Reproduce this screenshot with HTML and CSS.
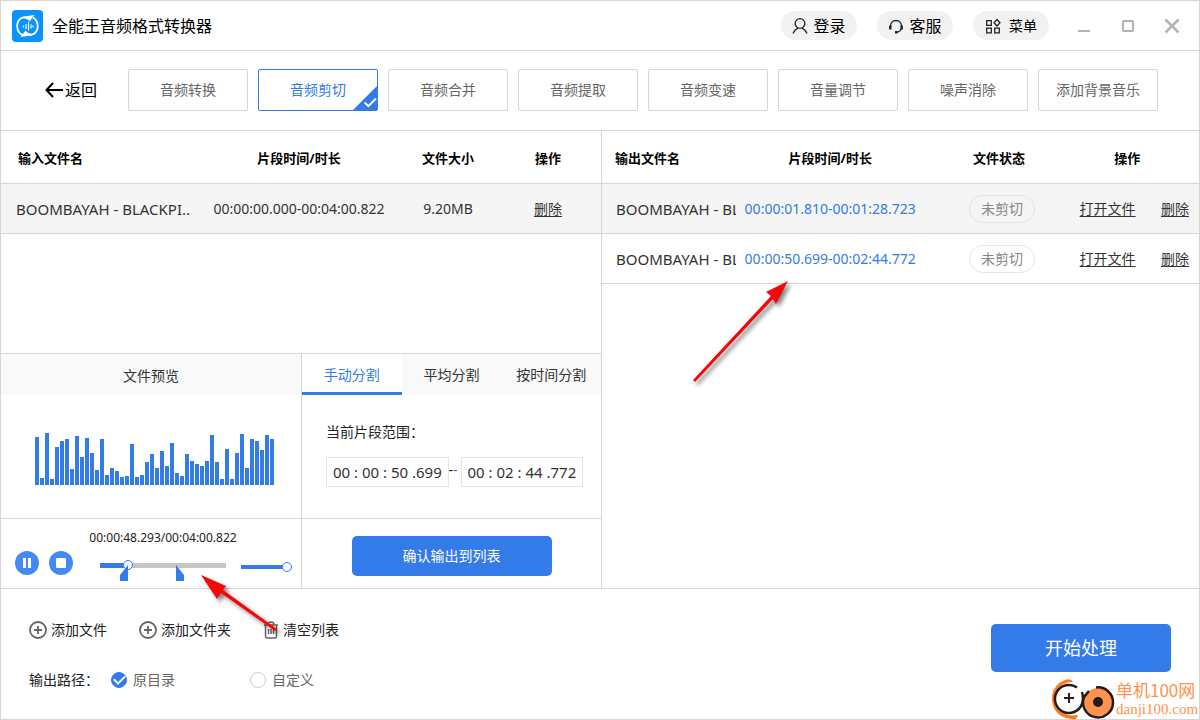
FILE: index.html
```html
<!DOCTYPE html>
<html lang="zh-CN">
<head>
<meta charset="utf-8">
<title>全能王音频格式转换器</title>
<link rel="stylesheet" href="styles.css">
</head>
<body>
<div class="app">
  <header class="titlebar">
    <svg class="logo" viewBox="0 0 31 32" aria-hidden="true">
      <rect width="31" height="32" rx="4" fill="#0a93ff"/>
      <g fill="none" stroke="#fff" stroke-width="1.8">
        <path d="M11.500 25.500A10.200 10.200 0 0 1 8.500 8.500L13 6.800"/>
        <path d="M21 7.500A10.200 10.200 0 0 1 22.500 23.500L18 25.500"/>
      </g>
      <path d="M12 6.500L22.500 5L17.500 11.500Q15.500 8.500 12 8.500ZM19 25.500L8.500 27L13.500 20.500Q15.500 23.500 19 23.500Z" fill="#fff"/>
      <path d="M11.500 15.500v2M14 14v5M16.500 12v8.500M19 14.500v4M21 15.500v2" stroke="#fff" stroke-width="1.200"/>
    </svg>
    <h1 class="title">全能王音频格式转换器</h1>
    <div class="pills">
      <button class="pill" type="button">
        <svg class="pill-icon" viewBox="0 0 16 16"><circle cx="8" cy="5.500" r="4.800"/><path d="M1 15.500Q3 11.500 6 10.200M15 15.500Q13 11.500 10 10.200"/></svg>登录</button>
      <button class="pill" type="button">
        <svg class="pill-icon" viewBox="0 0 16 16"><path d="M2.500 9V8a5.500 5.500 0 0 1 11 0v2Q13 13.500 8.500 14.300"/><path stroke-width="2.400" d="M2.300 7.500v4M13.700 7.500v4M7 14.300h2.500"/></svg>客服</button>
      <button class="pill pill-menu" type="button">
        <svg class="pill-icon" viewBox="0 0 16 16"><path d="M1.700 2.700h4.600v4.600H1.700zM1.700 10.200h4.600v4.600H1.700zM9.700 10.200h4.600v4.600H9.700zM12 1.500L15 4.800L12 8L9 4.800Z"/></svg>菜单</button>
    </div>
    <div class="window-buttons">
      <button type="button" aria-label="最小化"><svg viewBox="0 0 16 16"><path d="M2 13h12"/></svg></button>
      <button type="button" aria-label="最大化"><svg viewBox="0 0 16 16"><rect x="3" y="3" width="10" height="10" rx="1"/></svg></button>
      <button type="button" aria-label="关闭"><svg viewBox="0 0 16 16"><path stroke-width="2.500" d="M1.500 1.500l13 13M14.500 1.500l-13 13"/></svg></button>
    </div>
  </header>

  <nav class="toolbar">
    <a class="back" href="#"><svg viewBox="0 0 18 16"><path d="M8 1L1.500 8L8 15M1.500 8H18"/></svg>返回</a>
    <div class="modes">
      <button class="mode" type="button">音频转换</button>
      <button class="mode mode-active" type="button">音频剪切<svg class="mode-check" viewBox="0 0 25 25"><path class="corner" d="M25 0V25H0Z"/><path class="tick" d="M12 17l4 4l8-8"/></svg></button>
      <button class="mode" type="button">音频合并</button>
      <button class="mode" type="button">音频提取</button>
      <button class="mode" type="button">音频变速</button>
      <button class="mode" type="button">音量调节</button>
      <button class="mode" type="button">噪声消除</button>
      <button class="mode" type="button">添加背景音乐</button>
    </div>
  </nav>

  <main class="workspace">
    <section class="input-side">
      <div class="input-list">
        <table class="files files-in">
          <colgroup><col class="c-name"><col class="c-time"><col class="c-size"><col class="c-op"></colgroup>
          <thead><tr><th class="first">输入文件名</th><th class="nudge">片段时间/时长</th><th>文件大小</th><th class="nudge">操作</th></tr></thead>
          <tbody><tr class="selected"><td class="name">BOOMBAYAH - BLACKPI..</td><td class="nudge">00:00:00.000-00:04:00.822</td><td>9.20MB</td><td class="nudge"><a href="#">删除</a></td></tr></tbody>
        </table>
      </div>
      <div class="editor">
        <section class="preview">
          <h2 class="panel-head">文件预览</h2>
          <div class="wave-box">
            <svg class="wave" viewBox="0 0 239 52" role="img" aria-label="波形"><path d="M2 52v-48M7 52v-7M12 52v-52M17 52v-6M22 52v-38M27 52v-44M32 52v-46M37 52v-16M42 52v-49M47 52v-28M52 52v-47M57 52v-32M62 52v-15M67 52v-46M72 52v-10M77 52v-17M82 52v-14M87 52v-8M92 52v-9M97 52v-41M102 52v-8M107 52v-10M112 52v-23M117 52v-31M122 52v-17M127 52v-34M132 52v-19M137 52v-42M142 52v-12M147 52v-9M152 52v-31M157 52v-24M162 52v-21M167 52v-19M172 52v-24M177 52v-50M182 52v-23M187 52v-6M192 52v-36M197 52v-6M202 52v-32M207 52v-51M212 52v-17M217 52v-46M222 52v-44M227 52v-35M232 52v-50M237 52v-46"/></svg>
          </div>
          <div class="player">
            <button class="round" type="button" aria-label="暂停"><svg viewBox="0 0 24 24"><path d="M8 7h3v10H8zM13 7h3v10h-3z"/></svg></button>
            <button class="round" type="button" aria-label="停止"><svg viewBox="0 0 24 24"><rect x="7" y="7" width="10" height="10" rx="1"/></svg></button>
            <div class="scrub">
              <span class="clock">00:00:48.293/00:04:00.822</span>
              <div class="track">
                <input class="seek" type="range" min="0" max="100" value="20" aria-label="播放进度">
                <svg class="marker marker-start" viewBox="0 0 8 16"><path d="M8 0V16H0V10Z"/></svg>
                <svg class="marker marker-end" viewBox="0 0 8 16"><path d="M0 0V16H8V10Z"/></svg>
              </div>
            </div>
            <input class="volume" type="range" min="0" max="100" value="100" aria-label="音量">
          </div>
        </section>
        <section class="split">
          <div class="panel-head tabs" role="tablist">
            <button class="tab tab-active" type="button" role="tab" aria-selected="true">手动分割</button>
            <button class="tab" type="button" role="tab">平均分割</button>
            <button class="tab" type="button" role="tab">按时间分割</button>
          </div>
          <div class="range-form">
            <label for="start-time">当前片段范围：</label>
            <div class="range-row">
              <input id="start-time" type="text" value="00 : 00 : 50 .699">
              <span class="dash">-<span class="dash-end">-</span></span>
              <input type="text" value="00 : 02 : 44 .772" aria-label="结束时间">
            </div>
          </div>
          <div class="confirm"><button class="primary confirm-button" type="button">确认输出到列表</button></div>
        </section>
      </div>
    </section>

    <section class="output-side">
      <table class="files files-out">
        <colgroup><col class="c-name"><col class="c-time"><col class="c-status"><col class="c-op"></colgroup>
        <thead><tr><th class="first">输出文件名</th><th>片段时间/时长</th><th class="status-head">文件状态</th><th class="op-head">操作</th></tr></thead>
        <tbody>
          <tr class="selected"><td class="name">BOOMBAYAH - BL</td><td class="time">00:00:01.810-00:01:28.723</td><td><span class="status">未剪切</span></td><td class="ops"><div><a href="#">打开文件</a><a href="#">删除</a></div></td></tr>
          <tr><td class="name">BOOMBAYAH - BL</td><td class="time">00:00:50.699-00:02:44.772</td><td><span class="status">未剪切</span></td><td class="ops"><div><a href="#">打开文件</a><a href="#">删除</a></div></td></tr>
        </tbody>
      </table>
    </section>
  </main>

  <footer class="bottom">
    <div class="options">
      <div class="actions">
        <button class="action" type="button"><svg viewBox="0 0 18 18"><circle cx="9" cy="9" r="8"/><path d="M5 9h8M9 5v8"/></svg>添加文件</button>
        <button class="action" type="button"><svg viewBox="0 0 18 18"><circle cx="9" cy="9" r="8"/><path d="M5 9h8M9 5v8"/></svg>添加文件夹</button>
        <button class="action" type="button"><svg class="trash" viewBox="0 0 16 18"><path d="M1 4h14M5 4Q5 1 8 1Q11 1 11 4M2.500 4v11.500q0 1.500 1.500 1.500h8q1.500 0 1.500-1.500V4M5.500 8v5M8 8v5M10.500 8v5"/></svg>清空列表</button>
      </div>
      <div class="paths">
        <span>输出路径：</span>
        <label class="choice"><input type="radio" name="path" checked>原目录</label>
        <label class="choice"><input type="radio" name="path">自定义</label>
      </div>
    </div>
    <button class="primary start-button" type="button">开始处理</button>
  </footer>

  <div class="watermark">
    <svg viewBox="0 0 64 42" aria-hidden="true">
      <path d="M22 4Q20 0 14 2Q3 6 1 18Q0 31 10 38Q17 42 25 41L27 37Q14 39 7 31Q1 22 6 12Q11 4 22 4Z" fill="#ff7a1a"/>
      <circle cx="18" cy="20" r="14" fill="#fff"/>
      <path d="M26 9.500A14 14 0 1 0 31 26Q33 21 31 14" fill="none" stroke="#241a1a" stroke-width="2.500"/>
      <circle cx="47" cy="24" r="14" fill="#ff924d"/>
      <path d="M45 9.500A15 15 0 1 1 33 19L38 13" fill="none" stroke="#241a1a" stroke-width="2.500"/>
      <circle cx="47" cy="24" r="5" fill="#241a1a"/>
      <path d="M13 20h10M18 15v10" stroke="#241a1a" stroke-width="2"/>
    </svg>
    <p><span class="mark-name">单机100网</span><span class="mark-site">danji100.com</span></p>
  </div>
  <svg class="arrow arrow-output" viewBox="0 0 110 116" aria-hidden="true"><path d="M5 110L83 26L78 22L100 11L88 34L85 29L7 112Z"/></svg>
  <svg class="arrow arrow-player" viewBox="0 0 90 70" aria-hidden="true"><path d="M81 59L27 21L23 27L7 3L32 14L29 18L83 57Z"/></svg>
</div>
</body>
</html>
```

FILE: styles.css
```css
* { box-sizing: border-box; }

:root {
  --blue: #337be9;
  --line: #d6d6d6;
  --text: #333;
}

body {
  margin: 0;
  background: #fff;
  color: var(--text);
  font: 14px/20px "Noto Sans", "Noto Sans CJK SC", sans-serif;
}

h1, h2, p { margin: 0; font-weight: 400; }

button {
  padding: 0;
  border: 0;
  background: none;
  color: inherit;
  font: inherit;
  white-space: nowrap;
}

svg { display: block; flex: none; }

.app {
  position: relative;
  display: flex;
  flex-direction: column;
  min-height: 100vh;
  border: 1px solid var(--line);
}

/* Title bar */
.titlebar {
  display: flex;
  align-items: center;
  height: 50px;
  padding: 0 19px 0 11px;
  border-bottom: 1px solid var(--line);
}
.logo { width: 31px; height: 32px; }
.title { margin-left: 9px; color: #000; font-size: 16px; line-height: 24px; }
.pills { display: flex; gap: 20px; margin-left: auto; }
.pill {
  display: flex;
  align-items: center;
  justify-content: center;
  gap: 5px;
  width: 76px;
  height: 29px;
  border-radius: 15px;
  background: #f2f2f2;
  color: #000;
  font-size: 16px;
}
.pill-menu { gap: 8px; font-size: 14px; }
.pill-icon { width: 16px; height: 16px; fill: none; stroke: #222; stroke-width: 1.3; }
.window-buttons { display: flex; gap: 28px; margin-left: 27px; }
.window-buttons svg { width: 16px; height: 16px; fill: none; stroke: #b3b3b3; stroke-width: 2; }

/* Mode toolbar */
.toolbar {
  display: flex;
  align-items: center;
  gap: 31px;
  height: 80px;
  padding: 0 41px 2px 44px;
  border-bottom: 1px solid var(--line);
}
.back {
  display: flex;
  align-items: center;
  gap: 2px;
  color: #000;
  font-size: 16px;
  text-decoration: none;
  white-space: nowrap;
}
.back svg { width: 18px; height: 16px; fill: none; stroke: #000; stroke-width: 2; }
.modes { display: flex; flex: 1; gap: 10px; }
.mode {
  position: relative;
  flex: 1;
  height: 42px;
  border: 1px solid var(--line);
  border-radius: 2px;
  color: #666;
}
.mode-active { border-color: var(--blue); color: var(--blue); }
.mode-check { position: absolute; right: 0; bottom: 0; width: 24px; height: 24px; }
.corner { fill: var(--blue); }
.tick { fill: none; stroke: #fff; stroke-width: 2; }

/* Workspace */
.workspace {
  display: grid;
  grid-template-columns: 601fr 597fr;
  flex: 1;
  border-bottom: 1px solid var(--line);
}
.input-side {
  display: flex;
  flex-direction: column;
  border-right: 1px solid var(--line);
}
.input-list { flex: 1; }

.files { width: 100%; border-collapse: collapse; table-layout: fixed; }
.files th, .files td {
  padding: 0;
  border-bottom: 1px solid var(--line);
  text-align: center;
  white-space: nowrap;
}
.files th { height: 52px; padding-top: 2px; color: #000; font-size: 13px; font-weight: 700; }
.files td { height: 50px; padding-top: 2px; }
.files .first { padding-left: 17px; text-align: left; }
.files .name { padding-left: 15px; overflow: hidden; font-size: 15px; text-align: left; }
.files .nudge { padding-right: 4px; }
.files a { color: var(--text); text-underline-offset: 2px; }
.files .time { color: var(--blue); }
.selected { background: #f5f5f5; }
.files-in .c-name { width: 34%; }
.files-in .c-time { width: 32%; }
.files-in .c-size, .files-in .c-op { width: 17%; }
.files-out .c-name { width: 134px; }
.files-out .c-status { width: 26%; }
.files-out .c-op { width: 20%; }
.files-out .first { padding-left: 13px; }
.files-out .name { padding-left: 14px; }
.files-out .status-head { padding-right: 6px; }
.files-out .op-head { padding-right: 24px; }
.ops div { display: flex; justify-content: space-between; padding-right: 10px; }
.status {
  display: inline-block;
  width: 66px;
  border: 1px solid #e5e5e5;
  border-radius: 14px;
  color: #888;
  line-height: 26px;
}

/* Preview and split panels */
.editor {
  display: grid;
  grid-template-columns: repeat(2, minmax(0, 1fr));
  border-top: 1px solid var(--line);
}
.preview, .split {
  display: grid;
  grid-template-rows: 41px 123px 70px;
  grid-template-columns: minmax(0, 1fr);
}
.split { border-left: 1px solid var(--line); }
.panel-head {
  background: #f9f9f9;
  font-size: 14px;
  line-height: 43px;
  text-align: center;
}
.preview .panel-head { height: 41px; }
.wave-box { padding: 38px 27px 0 34px; }
.wave { width: 100%; height: 52px; fill: none; stroke: var(--blue); stroke-width: 4; }

.player {
  display: flex;
  align-items: flex-end;
  padding: 0 9px 13px 14px;
  border-top: 1px solid var(--line);
}
.round { width: 24px; height: 24px; border-radius: 50%; background: #438af5; }
.round + .round { margin-left: 10px; }
.round svg { fill: #fff; }
.scrub {
  display: flex;
  flex: 1;
  flex-direction: column;
  align-items: center;
  gap: 13px;
  min-width: 0;
  margin: 0 15px 0 27px;
}
.clock { color: #222; font-size: 12px; line-height: 18px; white-space: nowrap; }
.track { position: relative; width: 100%; height: 15px; }
.marker { position: absolute; top: 5px; width: 8px; height: 16px; fill: var(--blue); pointer-events: none; }
.marker-start { left: 16%; }
.marker-end { left: 60%; }

input[type="range"] {
  display: block;
  height: 10px;
  margin: 0;
  appearance: none;
  background: linear-gradient(to right, var(--blue) 22%, #c6c6c6 22%) center / 100% 5px no-repeat;
}
input[type="range"]::-webkit-slider-thumb {
  width: 10px;
  height: 10px;
  border: 1px solid var(--blue);
  border-radius: 50%;
  appearance: none;
  background: #fff;
}
input.seek { width: 100%; }
input.volume {
  width: 51px;
  margin-bottom: 3px;
  background: linear-gradient(var(--blue), var(--blue)) left / 90% 4px no-repeat;
}

.tabs { display: grid; grid-template-columns: 1fr 1fr 1fr; line-height: 41px; }
.tab-active {
  background: #fff;
  box-shadow: inset 0 -3px var(--blue);
  color: var(--blue);
}
.range-form { padding: 27px 18px 0 24px; color: #222; }
.range-row {
  display: grid;
  grid-template-columns: 1fr 12px 1fr;
  margin-top: 15px;
}
.range-row input {
  width: 100%;
  min-width: 0;
  height: 30px;
  padding: 0 4px 0 6px;
  border: 1px solid #e5e5e5;
  color: var(--text);
  font: inherit;
  font-size: 15px;
}
.dash { line-height: 26px; }
.dash-end { color: var(--blue); }
.confirm {
  display: flex;
  align-items: center;
  justify-content: center;
  border-top: 1px solid var(--line);
}

.primary { border-radius: 5px; background: var(--blue); color: #fff; }
.confirm-button { width: 200px; height: 40px; margin-top: 4px; }
.start-button { width: 180px; height: 48px; font-size: 18px; }

/* Footer */
.bottom {
  display: flex;
  align-items: flex-start;
  justify-content: space-between;
  height: 130px;
  padding: 31px 28px 0;
}
.start-button { margin-top: 4px; }
.options { display: grid; gap: 30px; color: #222; }
.actions { display: flex; gap: 32px; }
.action { display: flex; align-items: center; gap: 4px; }
.action svg { width: 18px; height: 18px; fill: none; stroke: #666; stroke-width: 1.8; }
.action .trash { width: 16px; stroke-width: 1.5; }
.paths { display: flex; align-items: center; }
.choice { display: flex; align-items: center; gap: 6px; color: #666; }
.choice:nth-child(2) { margin-left: 12px; }
.choice:nth-child(3) { margin-left: 75px; }
.choice input {
  display: grid;
  place-items: center;
  width: 16px;
  height: 16px;
  margin: 0;
  border: 1px solid #ccc;
  border-radius: 50%;
  appearance: none;
}
.choice input:checked { border-color: var(--blue); background: var(--blue); }
.choice input:checked::after {
  width: 9px;
  height: 5px;
  margin-bottom: 3px;
  border: solid #fff;
  border-width: 0 0 2px 2px;
  content: "";
  transform: rotate(-45deg);
}

/* Overlays */
.watermark {
  position: absolute;
  right: 1px;
  bottom: -1px;
  display: flex;
  gap: 1px;
  color: #ff924d;
  pointer-events: none;
}
.watermark svg { width: 64px; height: 42px; }
.watermark p { display: flex; flex-direction: column; width: 82px; white-space: nowrap; }
.mark-name { font-family: "Noto Sans CJK SC", sans-serif; font-size: 17px; line-height: 24px; }
.mark-site { font-family: "Liberation Serif", serif; font-size: 15px; line-height: 14px; }

.arrow {
  position: absolute;
  fill: #f70808;
  filter: drop-shadow(3px 3px 2px rgba(0, 0, 0, 0.5));
  overflow: visible;
  pointer-events: none;
}
.arrow-output { left: 687px; top: 269px; width: 110px; height: 116px; }
.arrow-player { left: 193px; top: 571px; width: 90px; height: 70px; }
```
